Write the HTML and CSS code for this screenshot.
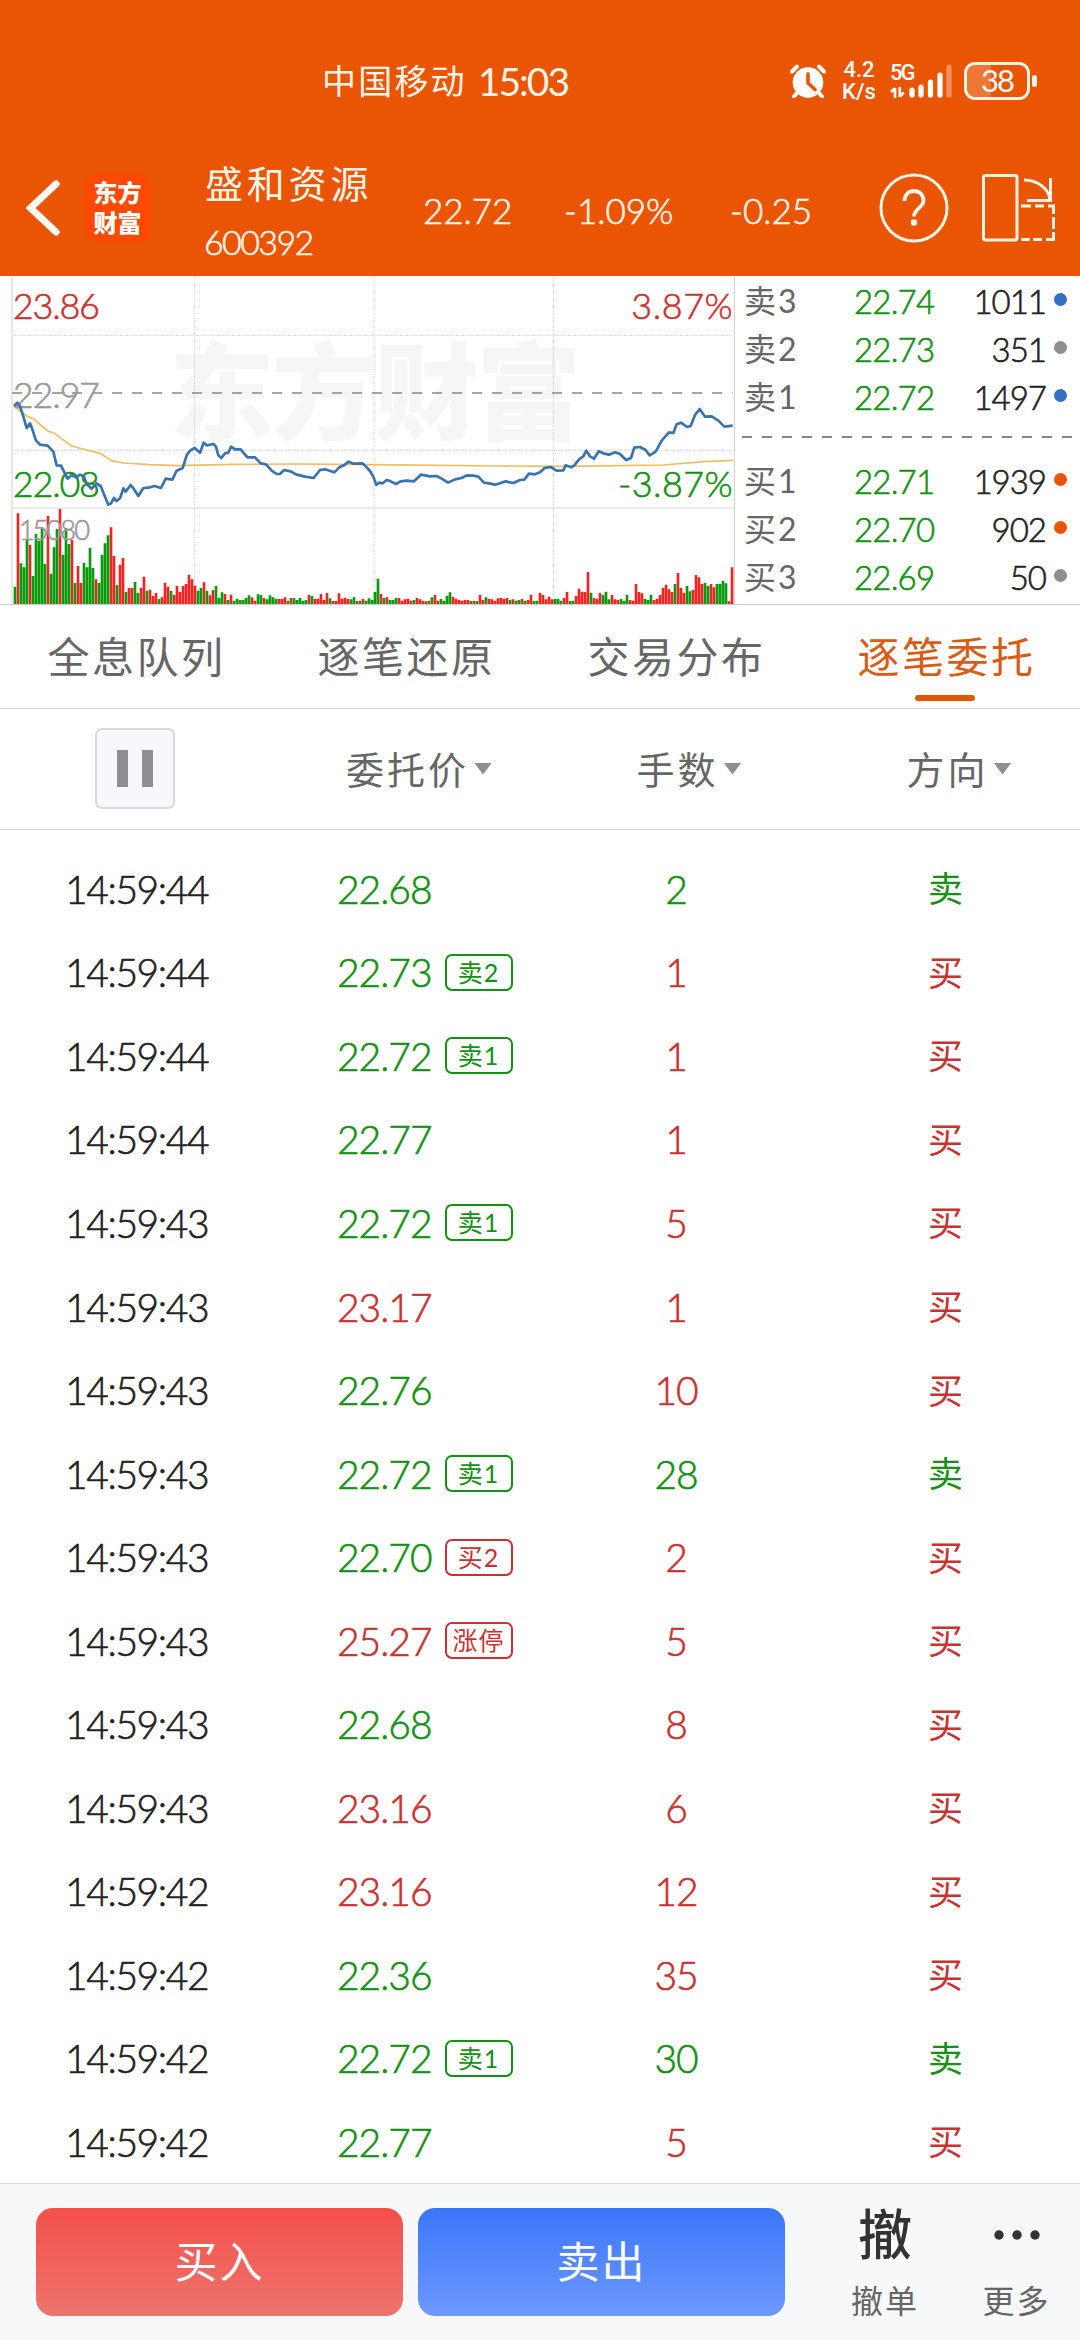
FILE: index.html
```html
<!DOCTYPE html>
<html lang="zh-CN">
<head>
<meta charset="utf-8">
<title>盛和资源 600392</title>
<link rel="stylesheet" href="styles.css">
</head>
<body>
<div class="app">
  <header class="top">
    <div class="status">
      <div class="carrier"><span class="carrier-name">中国移动</span><span class="clock">15:03</span></div>
      <div class="status-icons">
        <svg class="alarm" viewBox="0 0 36 34"><circle cx="18" cy="18.5" r="15.3" fill="#fff"/><path d="M2 7.5 7 2.500M34 7.500 29 2.500M7 29 4 32.500M29 29 32 32.500" stroke="#fff" stroke-width="4" stroke-linecap="round" fill="none"/><path d="M18 10v9l7 6.500" fill="none" stroke="#ea5504" stroke-width="3.600" stroke-linecap="round" stroke-linejoin="round"/></svg>
        <div class="speed"><span>4.2</span><span>K/s</span></div>
        <div class="signal">
          <span class="net">5G</span>
          <svg class="bars" viewBox="0 0 62 34"><g stroke="#fff" stroke-width="5.200" stroke-linecap="round"><path d="M22 26v5M31 23v8M40.500 18v13M50 11v20"/><path d="M59 3v28" opacity=".35"/></g><path d="M5 24v10M9.800 23v10M1 28l4-4M9.800 32.500l4-4" fill="none" stroke="#fff" stroke-width="2.600"/></svg>
        </div>
        <div class="battery"><span>38</span></div>
      </div>
    </div>
    <div class="title-bar">
      <svg class="back" viewBox="0 0 34 56"><path d="M30 4 4.500 28 30 52" fill="none" stroke="#fff" stroke-width="7" stroke-linecap="round" stroke-linejoin="miter"/></svg>
      <div class="logo"><span>东方</span><span>财富</span></div>
      <div class="stock"><span class="stock-name">盛和资源</span><span class="stock-code">600392</span></div>
      <div class="quote">22.72</div>
      <div class="quote">-1.09%</div>
      <div class="quote">-0.25</div>
      <svg class="help" viewBox="0 0 70 70"><circle cx="35" cy="35" r="33" fill="none" stroke="#fff3e6" stroke-width="3"/><path d="M25.500 28c0-6 4-10 9.500-10s9.500 4 9.500 9.500c0 7-9.500 8.500-9.500 16" fill="none" stroke="#fff3e6" stroke-width="3.800"/><circle cx="35" cy="49.500" r="3.200" fill="#fff3e6"/></svg>
      <svg class="rotate" viewBox="0 0 74 68"><g fill="none" stroke="#fff3e6" stroke-width="3"><rect x="1.500" y="1.500" width="33.500" height="64.500" rx="2"/><path d="M42 6c14 0 25 9 26 20M68.500 4v22.500H45"/><path d="M39 32h10M53 32h9M66 32h5.500v8M71.500 43v12M71.500 58v7.500H64M60 65.500h-9M48 65.500h-9"/></g></svg>
    </div>
  </header>

  <section class="market">
    <div class="chart">
      <svg class="plot" viewBox="0 18 2220 987">
        <text class="watermark" x="508" y="484" textLength="1236">东方财富</text>
        <g class="grid-dots"><path d="M584 24V1000M1122 24V1000M1660 24V1000M38 196H2198M38 541H2198"/></g>
        <g class="frame"><path d="M36 20V1002M36 714H2198"/></g>
        <path class="right-edge" d="M2203 20V1002"/>
        <path class="prev-close" d="M36 369H2198"/>
        <g id="volume"></g>
        <polyline class="avg-line" points="42,408 80,438 100,446 125,468 145,484 160,488 215,528 260,540 300,550 335,572 370,579 450,584 530,587 700,583 900,582 1110,584 1500,588 1700,589 1990,585 2110,575 2200,571"/>
        <g class="labels">
          <text class="up" x="38" y="146" textLength="262">23.86</text>
          <text class="flat" x="38" y="413" textLength="262">22.97</text>
          <text class="down" x="38" y="680" textLength="262">22.08</text>
          <text class="flat vol" x="56" y="811" textLength="214">15080</text>
          <text class="up" x="1894" y="146" textLength="304">3.87%</text>
          <text class="down" x="1854" y="680" textLength="344">-3.87%</text>
        </g>
        <polyline class="price-line" points="42,408 52,398 60,408 70,440 80,474 90,460 97,478 108,512 120,524 143,527 160,545 170,586 183,587 192,605 203,626 215,615 228,622 240,614 252,620 260,642 275,656 290,640 303,650 315,680 325,704 333,700 342,684 350,693 360,685 370,655 377,665 392,645 400,655 415,678 430,654 445,653 463,648 483,654 497,626 517,629 530,602 548,594 560,556 570,542 584,534 600,548 611,518 620,526 640,522 648,530 655,556 664,564 675,550 685,548 693,530 705,538 722,538 742,562 765,562 782,580 798,583 815,602 830,612 840,612 852,600 872,604 890,614 915,620 941,624 960,600 975,598 1003,607 1018,592 1032,586 1046,575 1060,581 1088,580 1100,592 1110,603 1120,620 1129,645 1137,638 1148,640 1160,630 1172,634 1188,642 1202,634 1220,632 1242,634 1263,614 1290,619 1310,618 1325,626 1344,638 1365,628 1385,624 1400,616 1420,617 1435,620 1452,638 1467,640 1485,644 1500,640 1517,634 1540,639 1560,630 1573,629 1587,611 1605,613 1620,607 1634,594 1652,591 1670,602 1690,601 1697,586 1715,592 1725,584 1738,567 1750,559 1759,542 1770,559 1782,566 1796,544 1810,550 1827,554 1845,547 1860,552 1878,570 1893,564 1903,533 1920,531 1937,540 1949,556 1967,545 1985,512 2007,487 2020,489 2030,463 2043,458 2061,471 2072,468 2085,435 2099,417 2115,440 2135,439 2155,452 2173,470 2198,467"/>
      </svg>
    </div>
    <div class="depth">
      <div class="level"><span class="side">卖3</span><span class="price">22.74</span><span class="qty">1011</span><i class="dot blue"></i></div>
      <div class="level"><span class="side">卖2</span><span class="price">22.73</span><span class="qty">351</span><i class="dot gray"></i></div>
      <div class="level"><span class="side">卖1</span><span class="price">22.72</span><span class="qty">1497</span><i class="dot blue"></i></div>
      <div class="split"></div>
      <div class="level"><span class="side">买1</span><span class="price">22.71</span><span class="qty">1939</span><i class="dot orange"></i></div>
      <div class="level"><span class="side">买2</span><span class="price">22.70</span><span class="qty">902</span><i class="dot orange"></i></div>
      <div class="level"><span class="side">买3</span><span class="price">22.69</span><span class="qty">50</span><i class="dot gray"></i></div>
    </div>
  </section>

  <nav class="tabs">
    <div class="tab">全息队列</div>
    <div class="tab">逐笔还原</div>
    <div class="tab">交易分布</div>
    <div class="tab active">逐笔委托</div>
  </nav>

  <div class="columns">
    <div class="col"><div class="pause"><i></i><i></i></div></div>
    <div class="col"><span>委托价</span><i class="caret"></i></div>
    <div class="col"><span>手数</span><i class="caret"></i></div>
    <div class="col"><span>方向</span><i class="caret"></i></div>
  </div>

  <main class="orders">
    <div class="row"><span class="time">14:59:44</span><span class="cell down">22.68</span><span class="num down">2</span><span class="dir down">卖</span></div>
    <div class="row"><span class="time">14:59:44</span><span class="cell down">22.73<b class="tag">卖2</b></span><span class="num up">1</span><span class="dir up">买</span></div>
    <div class="row"><span class="time">14:59:44</span><span class="cell down">22.72<b class="tag">卖1</b></span><span class="num up">1</span><span class="dir up">买</span></div>
    <div class="row"><span class="time">14:59:44</span><span class="cell down">22.77</span><span class="num up">1</span><span class="dir up">买</span></div>
    <div class="row"><span class="time">14:59:43</span><span class="cell down">22.72<b class="tag">卖1</b></span><span class="num up">5</span><span class="dir up">买</span></div>
    <div class="row"><span class="time">14:59:43</span><span class="cell up">23.17</span><span class="num up">1</span><span class="dir up">买</span></div>
    <div class="row"><span class="time">14:59:43</span><span class="cell down">22.76</span><span class="num up">10</span><span class="dir up">买</span></div>
    <div class="row"><span class="time">14:59:43</span><span class="cell down">22.72<b class="tag">卖1</b></span><span class="num down">28</span><span class="dir down">卖</span></div>
    <div class="row"><span class="time">14:59:43</span><span class="cell down">22.70<b class="tag up">买2</b></span><span class="num up">2</span><span class="dir up">买</span></div>
    <div class="row"><span class="time">14:59:43</span><span class="cell up">25.27<b class="tag up">涨停</b></span><span class="num up">5</span><span class="dir up">买</span></div>
    <div class="row"><span class="time">14:59:43</span><span class="cell down">22.68</span><span class="num up">8</span><span class="dir up">买</span></div>
    <div class="row"><span class="time">14:59:43</span><span class="cell up">23.16</span><span class="num up">6</span><span class="dir up">买</span></div>
    <div class="row"><span class="time">14:59:42</span><span class="cell up">23.16</span><span class="num up">12</span><span class="dir up">买</span></div>
    <div class="row"><span class="time">14:59:42</span><span class="cell down">22.36</span><span class="num up">35</span><span class="dir up">买</span></div>
    <div class="row"><span class="time">14:59:42</span><span class="cell down">22.72<b class="tag">卖1</b></span><span class="num down">30</span><span class="dir down">卖</span></div>
    <div class="row"><span class="time">14:59:42</span><span class="cell down">22.77</span><span class="num up">5</span><span class="dir up">买</span></div>
  </main>

  <footer class="actions">
    <div class="btn buy">买入</div>
    <div class="btn sell">卖出</div>
    <div class="action"><span class="glyph">撤</span><span class="caption">撤单</span></div>
    <div class="action"><svg class="more" viewBox="0 0 50 54"><g fill="#333"><circle cx="7" cy="27" r="4.700"/><circle cx="25" cy="27" r="4.700"/><circle cx="43" cy="27" r="4.700"/></g></svg><span class="caption">更多</span></div>
  </footer>
</div>
<script src="chart.js"></script>
</body>
</html>
```
FILE: styles.css
```css
* { box-sizing: border-box; }

body {
  margin: 0;
  background: #fff;
  color: #222;
  font-family: Lato, "Noto Sans CJK SC", sans-serif;
  font-weight: 400;
}

i { display: block; }

.app {
  width: 1080px;
  height: 2340px;
  display: flex;
  flex-direction: column;
  overflow: hidden;
}

.up { color: #c93232; }
.down { color: #149114; }

/* status bar and title */
.top {
  height: 276px;
  background: #ea5504;
  color: #fff3e6;
  padding-top: 52px;
  flex: none;
}

.status {
  height: 58px;
  padding: 0 43px 0 322px;
  display: flex;
  justify-content: space-between;
  align-items: center;
}

.carrier { display: flex; align-items: center; gap: 11px; line-height: 58px; }
.carrier-name { font-size: 34px; letter-spacing: 2.200px; }
.clock { font-size: 39px; letter-spacing: -2px; }
.status-icons { display: flex; align-items: center; height: 40px; color: #fff; }
.alarm { width: 36px; height: 34px; margin-right: 16px; }
.speed {
  width: 34px;
  margin-right: 14px;
  display: flex;
  flex-direction: column;
  align-items: center;
  font-family: Roboto, sans-serif;
  font-weight: 500;
  font-size: 22px;
  line-height: 22px;
}
.signal { position: relative; width: 62px; height: 34px; margin-right: 12px; }
.bars { display: block; width: 62px; height: 34px; }
.net {
  position: absolute;
  left: 0;
  top: -1px;
  font: 500 22px/19px Roboto, sans-serif;
  letter-spacing: -2px;
}
.battery {
  position: relative;
  width: 66px;
  height: 38px;
  border: 3px solid #fff3e6;
  border-radius: 11px;
  background: linear-gradient(90deg, rgba(255, 255, 255, .2) 40%, transparent 40%);
  font-size: 31px;
  line-height: 31px;
  letter-spacing: -2px;
  text-align: center;
  margin-right: 7px;
}
.battery::after {
  content: "";
  position: absolute;
  left: 65px;
  top: 10px;
  width: 5px;
  height: 12px;
  border-radius: 3px;
  background: #fff3e6;
}

.title-bar {
  height: 86px;
  margin-top: 55px;
  padding-left: 26px;
  display: grid;
  grid-template-columns: 58px 121px 218px 141px 166px 149px 103px 74px;
  grid-template-rows: 86px;
  align-items: center;
}
.back { width: 34px; height: 56px; }
.logo {
  width: 67px;
  height: 68px;
  border-radius: 14px;
  background: #ff4800;
  color: #fff;
  display: flex;
  flex-direction: column;
  align-items: center;
  justify-content: center;
  font-size: 24px;
  font-weight: 900;
  line-height: 30px;
}
.stock { display: flex; flex-direction: column; padding-top: 9px; }
.stock-name { font-size: 38px; line-height: 50px; letter-spacing: 3.800px; }
.stock-code { font-size: 34px; line-height: 50px; letter-spacing: -1.600px; margin-top: 9px; margin-left: -1px; }
.quote { font-size: 35px; line-height: 44px; padding-top: 4px; }
.quote, .stock-code, .time, .cell, .num, .price, .qty {
  font-weight: 300;
  -webkit-text-stroke: 0.600px currentColor;
}
.help { width: 70px; height: 70px; }
.rotate { width: 74px; height: 68px; }

/* intraday chart and order depth */
.market {
  height: 329px;
  display: flex;
  border-bottom: 1px solid #ccc;
  flex: none;
}
.chart { width: 740px; }
.plot { display: block; width: 740px; height: 329px; }
.watermark { font-size: 315px; font-weight: 900; fill: #f6f6f6; }
.grid-dots { fill: none; stroke: #c4c4c4; stroke-width: 3; stroke-dasharray: 3 4; }
.frame { fill: none; stroke: #e4e4e4; stroke-width: 5; }
.right-edge { stroke: #ccc; stroke-width: 3; }
.prev-close { stroke: #888; stroke-width: 5; stroke-dasharray: 30 30; }
.avg-line { fill: none; stroke: #efbd62; stroke-width: 5; }
.price-line { fill: none; stroke: #3a72b0; stroke-width: 8; stroke-linejoin: round; }
.vol-up { stroke: #ee2525; stroke-width: 8; }
.vol-down { stroke: #0b9a0b; stroke-width: 8; }
.labels { font-size: 108px; font-weight: 300; stroke-width: 1.800; }
.labels .up { fill: #c93232; stroke: #c93232; }
.labels .down { fill: #149114; stroke: #149114; }
.labels .flat { fill: #999; stroke: #999; }
.labels .vol { font-size: 82px; }

.depth { flex: 1; padding-top: 1px; }
.level {
  height: 48px;
  display: grid;
  grid-template-columns: 110px 101px 91px 20px;
  padding-left: 4px;
  align-items: center;
  font-size: 33px;
  line-height: 48px;
}
.side { color: #666; letter-spacing: 2px; font-size: 32px; }
.price { color: #149114; letter-spacing: -0.800px; }
.qty { text-align: right; letter-spacing: -1px; }
.dot { width: 13px; height: 13px; border-radius: 50%; margin: -4px 0 0 8px; }
.blue { background: #3070be; }
.gray { background: #8e8e93; }
.orange { background: #ea5504; }
.split {
  height: 2px;
  margin: 15px 8px 19px 2px;
  background: repeating-linear-gradient(90deg, #888 0 10px, transparent 10px 20px);
}

/* tabs */
.tabs {
  height: 104px;
  display: grid;
  grid-template-columns: repeat(4, 1fr);
  border-bottom: 1px solid #d4d4d4;
  flex: none;
}
.tab {
  position: relative;
  padding-left: 3px;
  text-align: center;
  font-size: 42px;
  line-height: 105px;
  letter-spacing: 2.500px;
  color: #666;
}
.tab.active { color: #d95c14; }
.tab.active::after {
  content: "";
  position: absolute;
  left: 105px;
  bottom: 9px;
  width: 60px;
  height: 6px;
  border-radius: 3px;
  background: #e25608;
}

/* column headings */
.columns {
  height: 121px;
  display: grid;
  grid-template-columns: repeat(4, 1fr);
  border-bottom: 1px solid #d4d4d4;
  flex: none;
}
.col {
  display: flex;
  align-items: center;
  justify-content: center;
  font-size: 38px;
  letter-spacing: 3px;
  color: #666;
}
.col:not(:first-child) { padding-left: 28px; }
.col span { padding-bottom: 4px; }
.pause {
  width: 80px;
  height: 81px;
  margin-bottom: 2px;
  border: 2px solid #d6d9de;
  border-radius: 7px;
  background: #f7f8fb;
  display: flex;
  align-items: center;
  justify-content: center;
  gap: 14px;
}
.pause i { width: 11px; height: 37px; background: #8e8e93; }
.caret {
  width: 18px;
  height: 12px;
  margin: 0 0 1px 5px;
  background: #8e8e93;
  clip-path: polygon(0 0, 100% 0, 50% 100%);
}

/* order list */
.orders { height: 1353px; padding-top: 17px; flex: none; }
.row {
  height: 83.560px;
  display: grid;
  grid-template-columns: 337px 203px 270px 270px;
  align-items: center;
  font-size: 39px;
}
.time { padding-left: 65px; letter-spacing: -1.400px; }
.cell { display: flex; align-items: center; letter-spacing: -1px; }
.tag {
  width: 68px;
  height: 37px;
  margin-left: 13px;
  border: 2px solid currentColor;
  border-radius: 7px;
  font-size: 25px;
  font-weight: 400;
  line-height: 32px;
  letter-spacing: 1px;
  text-align: center;
  flex: none;
  -webkit-text-stroke: 0;
}
.num { padding-left: 2px; text-align: center; letter-spacing: -1px; }
.dir { padding: 0 0 4px 1px; text-align: center; font-size: 35px; }

/* bottom actions */
.actions {
  flex: 1;
  display: grid;
  grid-template-columns: 367px 367px 128px 1fr;
  column-gap: 15px;
  padding: 24px 0 0 36px;
  border-top: 1px solid #d4d8da;
  background: #f6f8fa;
}
.btn {
  height: 108px;
  border-radius: 17px;
  color: #fff;
  font-size: 43px;
  line-height: 108px;
  letter-spacing: 2px;
  text-align: center;
}
.buy { background: linear-gradient(#f4504a, #ec746d); }
.sell { background: linear-gradient(#3b76f9, #6d98ff); }
.action { display: flex; flex-direction: column; align-items: center; }
.action:nth-child(3) { padding-left: 42px; }
.action:nth-child(4) { padding-left: 10px; }
.glyph { color: #333; font-size: 54px; line-height: 54px; font-weight: 500; white-space: nowrap; }
.more { width: 50px; height: 54px; }
.caption { margin-top: 16px; font-size: 32px; line-height: 46px; letter-spacing: 2px; color: #666; white-space: nowrap; }
```
FILE: chart.js
```js
// Per-minute volume: r = up tick, g = down tick, number = bar height in chart units
const minutes = `g52 r272 g122 g110 g195 r178 g84 g210 g190 g225 g120 r264 g91 g170 g225 r285 g148 g228 g180 r192
g63 r114 r63 g124 g110 g168 g108 r74 g63 g148 g182 g206 r230 r144 g57 r118 r138 g36 r48 r48
g66 g33 r48 r82 g40 r43 r24 r33 g15 r20 r64 r52 g39 r27 r54 r36 r54 r60 r88 r74
r55 g40 g48 r65 g39 r26 r42 g54 g18 g35 r30 g12 r28 g10 g15 g12 g12 g18 g26 r20
r10 g29 g27 r18 g14 g26 g20 g16 r15 r15 r20 g10 r18 g18 g12 g18 g10 g12 r27 g24
r15 r16 r30 r12 r33 g17 r9 r9 r32 r16 r19 r15 g14 g20 r9 g10 r15 g10 g17 g12
g36 g76 r30 g18 r20 g12 g12 g18 r18 r10 r14 r16 r10 g12 r18 r14 r10 g8 r10 g20
r27 r10 g15 g10 g25 g35 r22 r16 r12 r10 r12 r12 g9 r10 g9 r27 r12 g20 r16 r14
r10 r17 r18 r16 r18 g12 r14 g10 g12 r15 g10 r12 r27 g9 g10 r33 r27 r14 r22 r14
g15 g15 g10 r18 r36 g9 g10 r24 r46 r37 r36 r96 g34 r18 r16 r33 g27 g37 g14 r27
r14 r12 g15 g10 g27 r12 r10 r60 r36 r32 g16 g12 g28 r12 r16 r27 r48 r58 r44 r36
g60 r93 r48 r33 g54 g38 r42 r87 r80 r60 g64 g54 r60 r50 g60 g60 g70 g62 r8 r110`.split(/\s+/);

const paths = { r: "", g: "" };
minutes.forEach((bar, i) => {
  paths[bar[0]] += `M${45 + i * 9} 1002v-${bar.slice(1)}`;
});
document.getElementById("volume").innerHTML =
  `<path class="vol-up" d="${paths.r}"/><path class="vol-down" d="${paths.g}"/>`;
```
